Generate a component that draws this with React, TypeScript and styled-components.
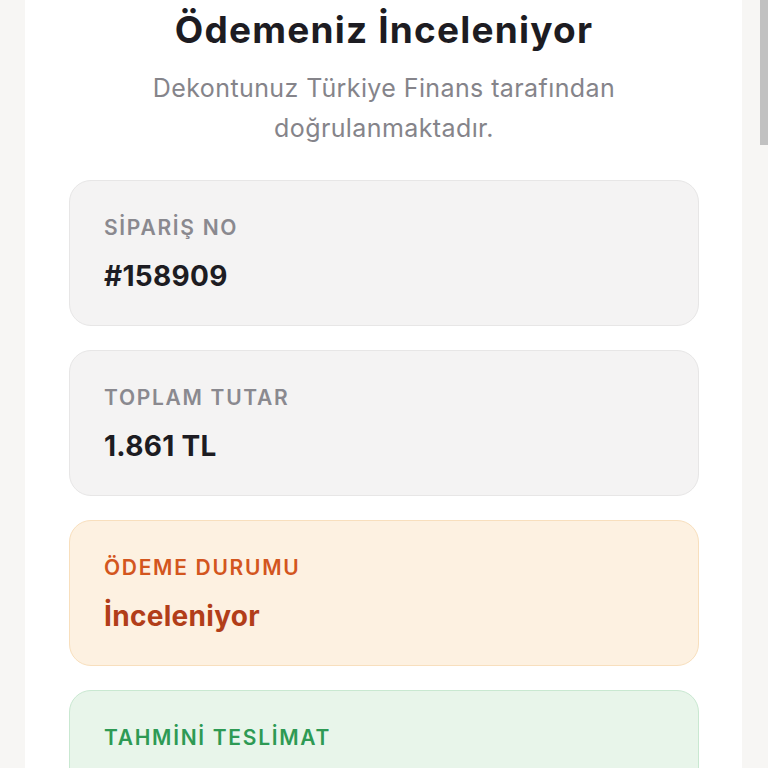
import React from "react";
import styled, { createGlobalStyle } from "styled-components";

const Global = createGlobalStyle`
  html, body { margin: 0; padding: 0; background: #f7f6f4; }
  body { font-family: Inter, "Noto Sans", sans-serif; overflow: hidden; }
`;

const Page = styled.div`
  display: flex;
  height: 768px;
  padding-left: 25px;
`;

const Column = styled.main`
  width: 717px;
  background: #ffffff;
  padding: 0 43px 0 44px;
  box-sizing: border-box;
  display: flex;
  flex-direction: column;
  align-items: stretch;
  overflow: hidden;
`;

const Title = styled.h1`
  margin: 4px 0 0;
  font-size: 37px;
  line-height: 52px;
  font-weight: 700;
  color: #1d1c22;
  text-align: center;
  letter-spacing: 1.2px;
`;

const Subtitle = styled.p`
  margin: 12px 0 0;
  font-size: 25px;
  line-height: 40px;
  font-weight: 400;
  color: #85848a;
  text-align: center;
  letter-spacing: 0.4px;
`;

const Cards = styled.div`
  margin-top: 32px;
  display: flex;
  flex-direction: column;
  gap: 24px;
`;

type Tone = "gray" | "orange" | "green";

const tones: Record<Tone, { bg: string; border: string; label: string; value: string }> = {
  gray: { bg: "#f4f3f3", border: "#e7e6e6", label: "#8a898f", value: "#1d1c22" },
  orange: { bg: "#fdf1e1", border: "#f8dfbd", label: "#d3561e", value: "#b23e19" },
  green: { bg: "#e8f5ea", border: "#c9e8d1", label: "#2e9a54", value: "#1f7a3f" },
};

const Card = styled.section<{ $tone: Tone }>`
  background: ${(p) => tones[p.$tone].bg};
  border: 1px solid ${(p) => tones[p.$tone].border};
  border-radius: 22px;
  padding: 35px 34px 0;
  height: 146px;
  box-sizing: border-box;
  flex-shrink: 0;
  display: flex;
  flex-direction: column;
  gap: 20px;
`;

const Label = styled.div<{ $tone: Tone }>`
  font-size: 21px;
  line-height: 24px;
  font-weight: 600;
  letter-spacing: 1.7px;
  color: ${(p) => tones[p.$tone].label};
`;

const Value = styled.div<{ $tone: Tone }>`
  font-size: 28px;
  line-height: 32px;
  font-weight: 700;
  letter-spacing: 0.3px;
  color: ${(p) => tones[p.$tone].value};
`;

const ScrollThumb = styled.div`
  position: fixed;
  top: 0;
  right: 0;
  width: 8px;
  height: 145px;
  background: #c1c1c1;
`;

const items: { label: string; value?: string; tone: Tone }[] = [
  { label: "SİPARİŞ NO", value: "#158909", tone: "gray" },
  { label: "TOPLAM TUTAR", value: "1.861 TL", tone: "gray" },
  { label: "ÖDEME DURUMU", value: "İnceleniyor", tone: "orange" },
  { label: "TAHMİNİ TESLİMAT", tone: "green" },
];

export default function App() {
  return (
    <>
      <Global />
      <Page>
        <Column>
          <Title>Ödemeniz İnceleniyor</Title>
          <Subtitle>
            Dekontunuz Türkiye Finans tarafından
            <br />
            doğrulanmaktadır.
          </Subtitle>
          <Cards>
            {items.map((it) => (
              <Card key={it.label} $tone={it.tone}>
                <Label $tone={it.tone}>{it.label}</Label>
                {it.value && <Value $tone={it.tone}>{it.value}</Value>}
              </Card>
            ))}
          </Cards>
        </Column>
      </Page>
      <ScrollThumb />
    </>
  );
}
